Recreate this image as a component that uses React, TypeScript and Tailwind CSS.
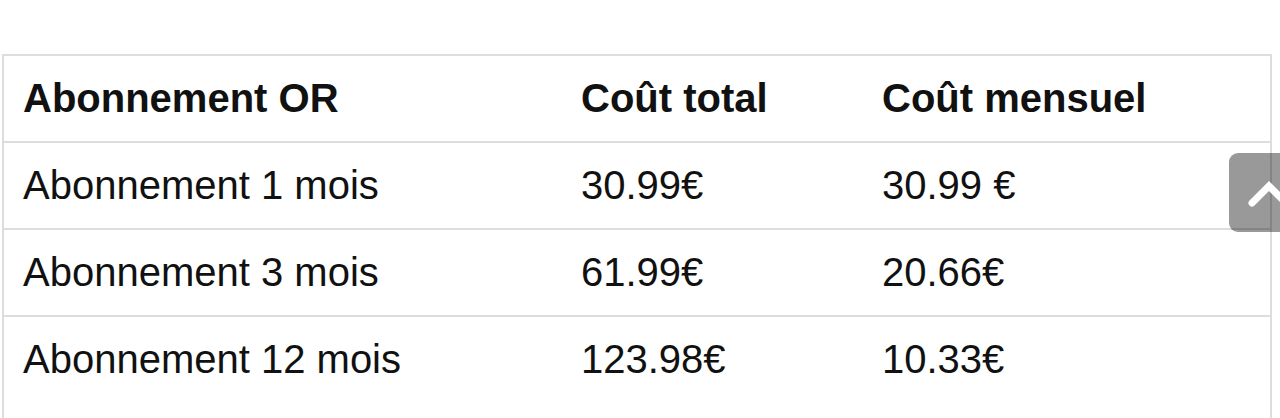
import React from 'react';

const rows = [
  { name: 'Abonnement 1 mois', total: '30.99€', monthly: '30.99 €' },
  { name: 'Abonnement 3 mois', total: '61.99€', monthly: '20.66€' },
  { name: 'Abonnement 12 mois', total: '123.98€', monthly: '10.33€' },
];

export default function App() {
  return (
    <div className="relative h-[418px] overflow-hidden bg-white text-[#111]" style={{ fontFamily: '"Liberation Sans", Arial, sans-serif' }}>
      <div className="pt-[54px] pl-[2px] w-[1272px]">
        <table className="w-full border-collapse border-2 border-b-0 border-[#dddddd] text-[40px] leading-[45px]">
          <thead>
            <tr>
              <th className="w-[559px] px-[19px] py-[20px] text-left font-bold">Abonnement OR</th>
              <th className="w-[301px] px-[19px] py-[20px] text-left font-bold">Coût total</th>
              <th className="px-[19px] py-[20px] text-left font-bold">Coût mensuel</th>
            </tr>
          </thead>
          <tbody>
            {rows.map((r, i) => {
              // last row runs past the bottom of the viewport
              const cell = i === rows.length - 1 ? 'px-[19px] pt-[20px] pb-[60px]' : 'px-[19px] py-[20px]';
              return (
                <tr key={r.name} className="border-t-2 border-[#dddddd]">
                  <td className={cell}>{r.name}</td>
                  <td className={cell}>{r.total}</td>
                  <td className={cell}>{r.monthly}</td>
                </tr>
              );
            })}
          </tbody>
        </table>
      </div>

      {/* back to top */}
      <button className="absolute left-[1229px] top-[153px] flex h-[79px] w-[80px] items-center justify-center rounded-[9px] bg-black/40">
        <svg width="44" height="30" viewBox="0 0 44 30" fill="none">
          <path d="M5 25 L22 8 L39 25" stroke="white" strokeWidth="7" strokeLinecap="round" strokeLinejoin="miter" />
        </svg>
      </button>
    </div>
  );
}
